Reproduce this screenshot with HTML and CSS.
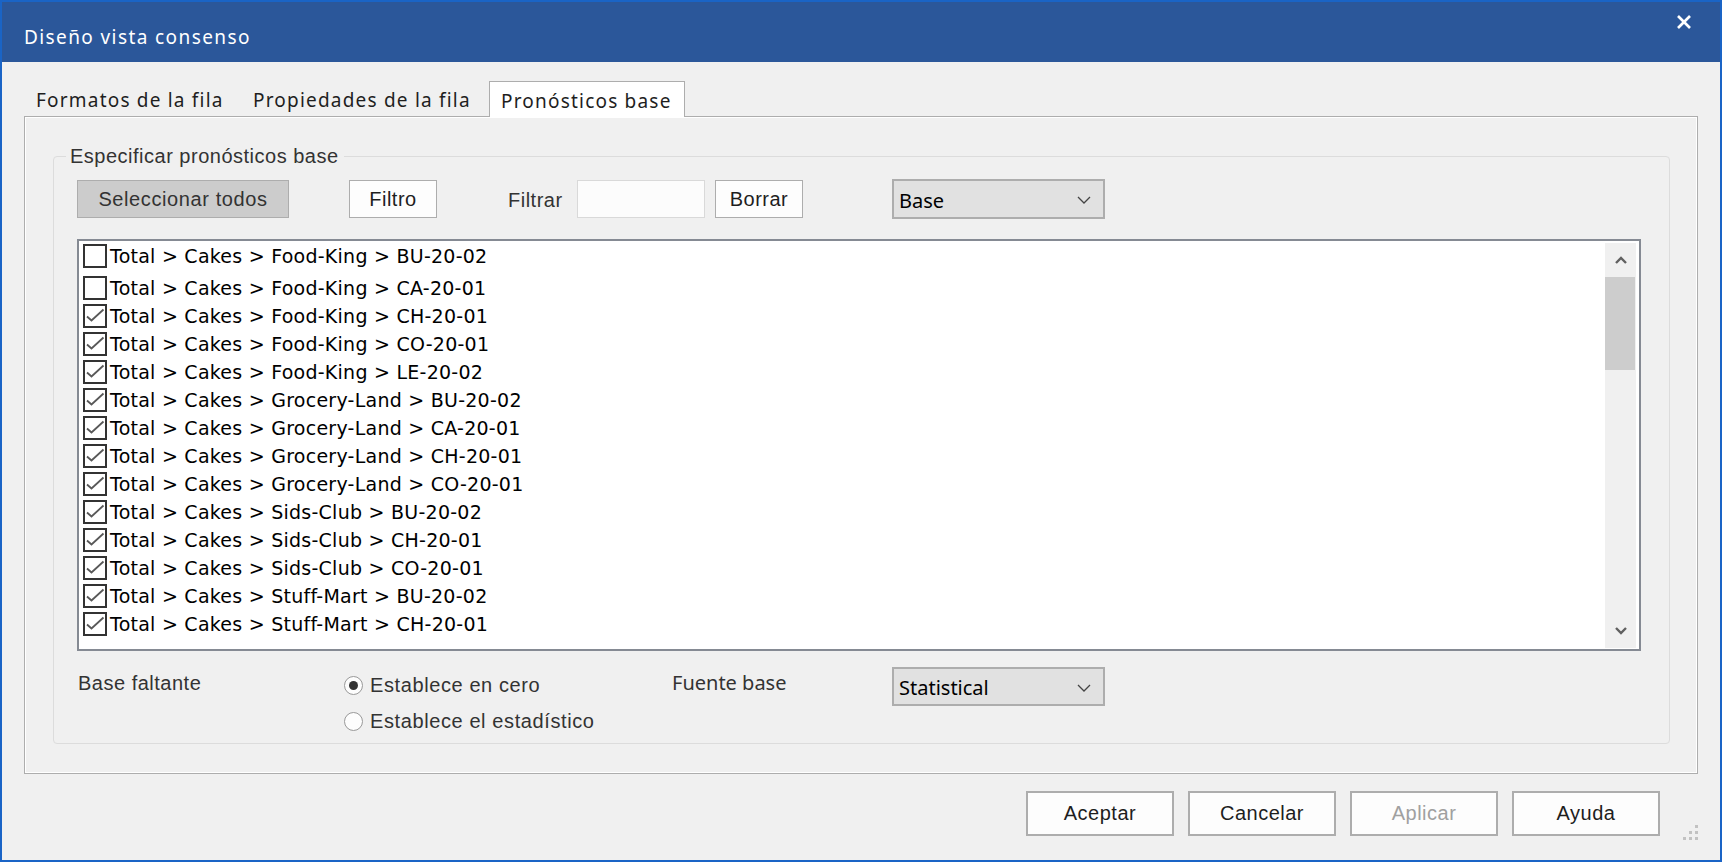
FILE: index.html
```html
<!DOCTYPE html>
<html lang="es">
<head>
<meta charset="UTF-8">
<title>Diseño vista consenso</title>
<link rel="stylesheet" href="styles.css">
</head>
<body>
  <div class="window">
    <!-- Title bar -->
    <div class="titlebar">
      <span class="title">Diseño vista consenso</span>
      <svg class="close" width="14" height="14" viewBox="0 0 14 14">
        <line x1="1" y1="1" x2="13" y2="13" stroke="#fff" stroke-width="2.6"/>
        <line x1="13" y1="1" x2="1" y2="13" stroke="#fff" stroke-width="2.6"/>
      </svg>
    </div>

    <!-- Tabs -->
    <div class="tabs">
      <div class="tab tab-1">Formatos de la fila</div>
      <div class="tab tab-2">Propiedades de la fila</div>
      <div class="tab tab-active">Pronósticos base</div>
    </div>

    <div class="panel">
      <fieldset class="group">
        <legend>Especificar pronósticos base</legend>

        <div class="toolbar">
          <button class="btn btn-select-all">Seleccionar todos</button>
          <button class="btn btn-small btn-filtro">Filtro</button>
          <span class="filter-label">Filtrar</span>
          <div class="filter-input"></div>
          <button class="btn btn-small btn-borrar">Borrar</button>
          <div class="combo combo-base">
            <span>Base</span>
            <svg width="14" height="8" viewBox="0 0 14 8"><polyline points="1,1 7,7 13,1" fill="none" stroke="#444" stroke-width="1.3"/></svg>
          </div>
        </div>

        <div class="listbox">
          <div class="rows">
            <div class="row row-first"><span class="check"></span>Total &gt; Cakes &gt; Food-King &gt; BU-20-02</div>
            <div class="row"><span class="check"></span>Total &gt; Cakes &gt; Food-King &gt; CA-20-01</div>
            <div class="row"><span class="check"><svg width="19" height="19" viewBox="0 0 19 19"><polyline points="1,9.5 5.5,13.5 17.5,2.5" fill="none" stroke="#585858" stroke-width="1.8"/></svg></span>Total &gt; Cakes &gt; Food-King &gt; CH-20-01</div>
            <div class="row"><span class="check"><svg width="19" height="19" viewBox="0 0 19 19"><polyline points="1,9.5 5.5,13.5 17.5,2.5" fill="none" stroke="#585858" stroke-width="1.8"/></svg></span>Total &gt; Cakes &gt; Food-King &gt; CO-20-01</div>
            <div class="row"><span class="check"><svg width="19" height="19" viewBox="0 0 19 19"><polyline points="1,9.5 5.5,13.5 17.5,2.5" fill="none" stroke="#585858" stroke-width="1.8"/></svg></span>Total &gt; Cakes &gt; Food-King &gt; LE-20-02</div>
            <div class="row"><span class="check"><svg width="19" height="19" viewBox="0 0 19 19"><polyline points="1,9.5 5.5,13.5 17.5,2.5" fill="none" stroke="#585858" stroke-width="1.8"/></svg></span>Total &gt; Cakes &gt; Grocery-Land &gt; BU-20-02</div>
            <div class="row"><span class="check"><svg width="19" height="19" viewBox="0 0 19 19"><polyline points="1,9.5 5.5,13.5 17.5,2.5" fill="none" stroke="#585858" stroke-width="1.8"/></svg></span>Total &gt; Cakes &gt; Grocery-Land &gt; CA-20-01</div>
            <div class="row"><span class="check"><svg width="19" height="19" viewBox="0 0 19 19"><polyline points="1,9.5 5.5,13.5 17.5,2.5" fill="none" stroke="#585858" stroke-width="1.8"/></svg></span>Total &gt; Cakes &gt; Grocery-Land &gt; CH-20-01</div>
            <div class="row"><span class="check"><svg width="19" height="19" viewBox="0 0 19 19"><polyline points="1,9.5 5.5,13.5 17.5,2.5" fill="none" stroke="#585858" stroke-width="1.8"/></svg></span>Total &gt; Cakes &gt; Grocery-Land &gt; CO-20-01</div>
            <div class="row"><span class="check"><svg width="19" height="19" viewBox="0 0 19 19"><polyline points="1,9.5 5.5,13.5 17.5,2.5" fill="none" stroke="#585858" stroke-width="1.8"/></svg></span>Total &gt; Cakes &gt; Sids-Club &gt; BU-20-02</div>
            <div class="row"><span class="check"><svg width="19" height="19" viewBox="0 0 19 19"><polyline points="1,9.5 5.5,13.5 17.5,2.5" fill="none" stroke="#585858" stroke-width="1.8"/></svg></span>Total &gt; Cakes &gt; Sids-Club &gt; CH-20-01</div>
            <div class="row"><span class="check"><svg width="19" height="19" viewBox="0 0 19 19"><polyline points="1,9.5 5.5,13.5 17.5,2.5" fill="none" stroke="#585858" stroke-width="1.8"/></svg></span>Total &gt; Cakes &gt; Sids-Club &gt; CO-20-01</div>
            <div class="row"><span class="check"><svg width="19" height="19" viewBox="0 0 19 19"><polyline points="1,9.5 5.5,13.5 17.5,2.5" fill="none" stroke="#585858" stroke-width="1.8"/></svg></span>Total &gt; Cakes &gt; Stuff-Mart &gt; BU-20-02</div>
            <div class="row"><span class="check"><svg width="19" height="19" viewBox="0 0 19 19"><polyline points="1,9.5 5.5,13.5 17.5,2.5" fill="none" stroke="#585858" stroke-width="1.8"/></svg></span>Total &gt; Cakes &gt; Stuff-Mart &gt; CH-20-01</div>
          </div>

          <!-- Vertical scrollbar -->
          <div class="scrollbar">
            <div class="scroll-arrow">
              <svg width="12" height="8" viewBox="0 0 12 8"><polyline points="1,7 6,2 11,7" fill="none" stroke="#606060" stroke-width="2.4"/></svg>
            </div>
            <div class="scroll-thumb"></div>
            <div class="scroll-track"></div>
            <div class="scroll-arrow">
              <svg width="12" height="8" viewBox="0 0 12 8"><polyline points="1,1 6,6 11,1" fill="none" stroke="#606060" stroke-width="2.4"/></svg>
            </div>
          </div>
        </div>

        <div class="options">
          <div class="opt-label">Base faltante</div>
          <div class="radios">
            <div class="radio-row"><span class="radio"><span class="dot"></span></span>Establece en cero</div>
            <div class="radio-row"><span class="radio"></span>Establece el estadístico</div>
          </div>
          <div class="opt-label source-label">Fuente base</div>
          <div class="combo combo-source">
            <span>Statistical</span>
            <svg width="14" height="8" viewBox="0 0 14 8"><polyline points="1,1 7,7 13,1" fill="none" stroke="#444" stroke-width="1.3"/></svg>
          </div>
        </div>
      </fieldset>
    </div>

    <!-- Dialog buttons -->
    <div class="footer">
      <button class="btn btn-dialog">Aceptar</button>
      <button class="btn btn-dialog">Cancelar</button>
      <button class="btn btn-dialog disabled">Aplicar</button>
      <button class="btn btn-dialog">Ayuda</button>
    </div>

    <svg class="grip" width="16" height="16" viewBox="0 0 16 16">
      <rect x="13" y="1" width="3" height="3" fill="#c2c2c2"/>
      <rect x="7" y="7" width="3" height="3" fill="#c2c2c2"/>
      <rect x="13" y="7" width="3" height="3" fill="#c2c2c2"/>
      <rect x="1" y="13" width="3" height="3" fill="#c2c2c2"/>
      <rect x="7" y="13" width="3" height="3" fill="#c2c2c2"/>
      <rect x="13" y="13" width="3" height="3" fill="#c2c2c2"/>
    </svg>
  </div>
</body>
</html>
```

FILE: styles.css
```css
/* Dialog window */
body {
  margin: 0;
  padding: 0;
  background-color: #f0f0f0;
}
.window {
  position: relative;
  height: 862px;
  box-sizing: border-box;
  border: 2px solid #1a64c6;
  background-color: #f0f0f0;
  display: flex;
  flex-direction: column;
}
.titlebar {
  height: 60px;
  flex-shrink: 0;
  background-color: #2b579a;
  display: flex;
  align-items: center;
  justify-content: space-between;
  padding: 10px 29px 0 22px;
  box-sizing: border-box;
}
.title {
  color: white;
  font-family: "Noto Sans", "Open Sans", sans-serif;
  font-size: 19px;
  letter-spacing: 1.4px;
}
.close {
  align-self: flex-start;
  margin-top: 3px;
}

/* Tabs */
.tabs {
  display: flex;
  align-items: flex-end;
  margin: 19px 0 -1px 22px;
  font-family: "Noto Sans", "Open Sans", sans-serif;
  font-size: 19px;
  letter-spacing: 1.2px;
  color: #1e1e1e;
  position: relative;
}
.tab {
  height: 32px;
  line-height: 30px;
  box-sizing: border-box;
  white-space: nowrap;
}
.tab-1 {
  width: 219px;
  padding-left: 12px;
}
.tab-2 {
  width: 246px;
  padding-left: 10px;
}
.tab-active {
  width: 196px;
  height: 36px;
  line-height: 38px;
  padding-left: 11px;
  background-color: white;
  border: 1px solid #adadad;
  border-bottom: none;
}
.panel {
  margin: 0 22px;
  height: 658px;
  box-sizing: border-box;
  border: 1px solid #adadad;
  box-shadow: inset 0 0 0 1px #fff;
  padding: 27px 27px 0 28px;
}

/* Group box */
.group {
  margin: 0;
  height: 600px;
  box-sizing: border-box;
  border: 1px solid #dcdcdc;
  border-radius: 4px;
  padding: 11px 28px 0 23px;
  font-family: "Liberation Sans", Arial, sans-serif;
  font-size: 20px;
  letter-spacing: 0.5px;
  color: #1e1e1e;
}
.group legend {
  margin-left: -11px;
  padding: 0 5px 0 4px;
  line-height: 24px;
  color: #333;
}
.toolbar {
  display: flex;
  align-items: center;
  height: 40px;
}
.btn {
  font-family: "Liberation Sans", Arial, sans-serif;
  font-size: 20px;
  letter-spacing: 0.5px;
  color: #1e1e1e;
  background-color: #fdfdfd;
  border: 1px solid #adadad;
  padding: 0;
  margin: 0;
  box-sizing: border-box;
}
.btn-select-all {
  width: 212px;
  height: 38px;
  background-color: #cccccc;
  color: #333;
  letter-spacing: 0.6px;
}
.btn-small {
  width: 88px;
  height: 38px;
}
.btn-filtro {
  margin-left: 60px;
}
.filter-label {
  margin-left: 71px;
  width: 69px;
  padding-top: 3px;
  color: #333;
}
.filter-input {
  width: 128px;
  height: 38px;
  box-sizing: border-box;
  background-color: #fcfcfc;
  border: 1px solid #d9d9d9;
}
.btn-borrar {
  margin-left: 10px;
}
.combo {
  width: 213px;
  height: 40px;
  box-sizing: border-box;
  background-color: #e1e1e1;
  border: 2px solid #adadad;
  display: flex;
  align-items: center;
  justify-content: space-between;
  padding: 2px 12px 0 5px;
  font-family: "Noto Sans", "Open Sans", sans-serif;
  font-size: 20px;
  letter-spacing: 0;
  color: #000;
}
.combo-base {
  margin-left: 89px;
}

/* List with checkboxes */
.listbox {
  margin-top: 20px;
  height: 412px;
  box-sizing: border-box;
  border: 2px solid #858a93;
  background-color: white;
  display: flex;
}
.rows {
  flex: 1;
  padding: 1px 0 0 4px;
  font-family: "DejaVu Sans", Verdana, sans-serif;
  font-size: 19px;
  letter-spacing: 0.25px;
  color: #000;
}
.row {
  height: 28px;
  display: flex;
  align-items: center;
}
.row-first {
  margin-bottom: 4px;
}
.check {
  width: 24px;
  height: 24px;
  box-sizing: border-box;
  border: 2px solid #333;
  margin-right: 3px;
  display: flex;
  align-items: center;
  justify-content: center;
  flex-shrink: 0;
}
.scrollbar {
  width: 31px;
  margin: 2px 3px 1px 0;
  background-color: #f0f0f0;
  display: flex;
  flex-direction: column;
}
.scroll-arrow {
  height: 34px;
  display: flex;
  align-items: center;
  justify-content: center;
}
.scroll-thumb {
  height: 93px;
  width: 30px;
  background-color: #cdcdcd;
}
.scroll-track {
  flex: 1;
}

/* Missing base options */
.options {
  display: flex;
  align-items: flex-start;
  margin-top: 16px;
  color: #333;
}
.opt-label {
  width: 266px;
  line-height: 24px;
  padding-top: 4px;
  margin-left: 1px;
}
.source-label {
  width: 220px;
  margin-left: 0;
  font-family: "Noto Sans", "Open Sans", sans-serif;
  letter-spacing: 0;
}
.radios {
  width: 328px;
  letter-spacing: 0.6px;
}
.radio-row {
  height: 36px;
  display: flex;
  align-items: center;
}
.radio {
  width: 19px;
  height: 19px;
  box-sizing: border-box;
  border: 1px solid #999;
  border-radius: 50%;
  background-color: #fdfdfd;
  margin-right: 7px;
  display: flex;
  align-items: center;
  justify-content: center;
}
.radio .dot {
  width: 9px;
  height: 9px;
  border-radius: 50%;
  background-color: #333;
}
.combo-source {
  height: 39px;
}

/* Footer */
.footer {
  display: flex;
  justify-content: flex-end;
  gap: 14px;
  margin-top: 17px;
  padding-right: 60px;
}
.btn-dialog {
  width: 148px;
  height: 45px;
  border: 2px solid #adadad;
}
.btn-dialog.disabled {
  color: #a0a0a0;
}
.grip {
  position: absolute;
  right: 22px;
  bottom: 20px;
}
```
